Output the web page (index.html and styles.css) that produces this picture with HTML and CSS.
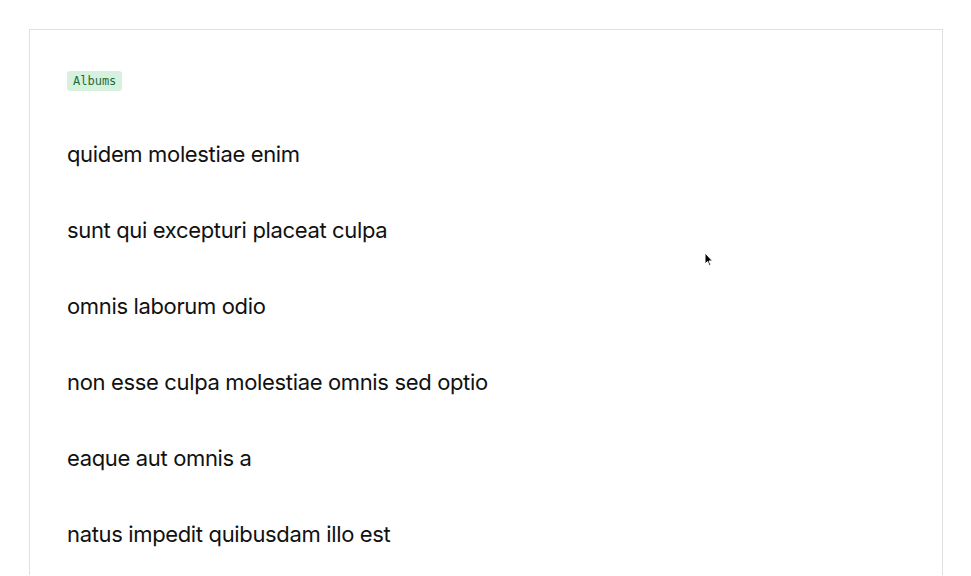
FILE: index.html
```html
<!DOCTYPE html>
<html lang="en">
  <head>
    <meta charset="UTF-8" />
    <meta name="viewport" content="width=device-width, initial-scale=1.0" />
    <title>Albums</title>
    <link rel="stylesheet" href="styles.css">
  </head>
  <body>
    <main class="card">
      <span class="badge">Albums</span>
      <ul class="albums">
        <li>quidem molestiae enim</li>
        <li>sunt qui excepturi placeat culpa</li>
        <li>omnis laborum odio</li>
        <li>non esse culpa molestiae omnis sed optio</li>
        <li>eaque aut omnis a</li>
        <li>natus impedit quibusdam illo est</li>
      </ul>
    </main>
    <svg class="cursor" width="10" height="16" viewBox="0 0 10 16">
      <path d="M1 1 L1 12 L3.5 9.5 L5.5 14 L7 13.3 L5 9 L8.5 9 Z" fill="#000" stroke="#fff" stroke-width="1"/>
    </svg>
  </body>
</html>
```

FILE: styles.css
```css
body {
  margin: 0;
  background: #fff;
  color: #111;
  font-family: "Inter", "Liberation Sans", sans-serif;
  height: 576px;
  overflow: hidden;
}

.card {
  margin: 29px 28px 0 29px;
  border: 1px solid #e0e0e0;
  border-bottom: none;
  padding: 41px 37px 0;
  height: 546px;
  box-sizing: border-box;
  display: flex;
  flex-direction: column;
  align-items: flex-start;
}

.badge {
  font-family: "DejaVu Sans Mono", "Liberation Mono", monospace;
  font-size: 12px;
  line-height: 20px;
  padding: 0 6px;
  background: #d6f2df;
  color: #1f6b3c;
  border-radius: 3px;
}

.albums {
  list-style: none;
  margin: 49px 0 0;
  padding: 0;
  display: flex;
  flex-direction: column;
  gap: 48px;
}

.albums li {
  font-size: 22px;
  line-height: 28px;
  letter-spacing: -0.35px;
}

.cursor {
  position: absolute;
  left: 704px;
  top: 252px;
}
```
